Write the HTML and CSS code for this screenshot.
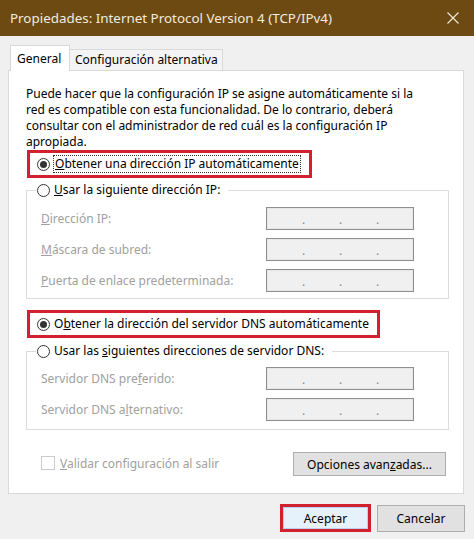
FILE: index.html
```html
<!DOCTYPE html>
<html lang="es">
<head>
<meta charset="utf-8">
<title>Propiedades: Internet Protocol Version 4 (TCP/IPv4)</title>
<link rel="stylesheet" href="styles.css">
</head>
<body>
<div class="window">
  <div class="titlebar">
    <span class="title">Propiedades: Internet Protocol Version 4 (TCP/IPv4)</span>
    <svg class="close" width="12" height="12" viewBox="0 0 12 12" aria-label="Cerrar"><path d="M0.5 0.5L11.5 11.5M11.5 0.5L0.5 11.5" stroke="#f2ebdf" stroke-width="1.1" fill="none"/></svg>
  </div>
  <div class="body">
    <div class="tabs">
      <div class="tab active">General</div>
      <div class="tab">Configuración alternativa</div>
    </div>
    <div class="panel">
      <p class="intro">Puede hacer que la configuración IP se asigne automáticamente si la<br>red es compatible con esta funcionalidad. De lo contrario, deberá<br>consultar con el administrador de red cuál es la configuración IP<br>apropiada.</p>

      <div class="option highlight first"><span class="radio checked"></span><span class="label focus"><u>O</u>btener una dirección IP automáticamente</span></div>

      <fieldset class="group group-ip">
        <legend class="option"><span class="radio"></span><span class="label"><u>U</u>sar la siguiente dirección IP:</span></legend>
        <div class="field"><span class="flabel"><u>D</u>irección IP:</span><span class="ipbox"><i>.</i><i>.</i><i>.</i></span></div>
        <div class="field"><span class="flabel"><u>M</u>áscara de subred:</span><span class="ipbox"><i>.</i><i>.</i><i>.</i></span></div>
        <div class="field"><span class="flabel"><u>P</u>uerta de enlace predeterminada:</span><span class="ipbox"><i>.</i><i>.</i><i>.</i></span></div>
      </fieldset>

      <div class="option highlight second"><span class="radio checked"></span><span class="label">O<u>b</u>tener la dirección del servidor DNS automáticamente</span></div>

      <fieldset class="group group-dns">
        <legend class="option"><span class="radio"></span><span class="label">Usar las <u>s</u>iguientes direcciones de servidor DNS:</span></legend>
        <div class="field"><span class="flabel">Servidor DNS pre<u>f</u>erido:</span><span class="ipbox"><i>.</i><i>.</i><i>.</i></span></div>
        <div class="field"><span class="flabel">Servidor DNS a<u>l</u>ternativo:</span><span class="ipbox"><i>.</i><i>.</i><i>.</i></span></div>
      </fieldset>

      <div class="bottom-row">
        <div class="check"><span class="checkbox"></span><span class="check-label"><u>V</u>alidar configuración al salir</span></div>
        <button class="btn advanced" type="button">Opciones avan<u>z</u>adas...</button>
      </div>
    </div>
    <div class="footer">
      <div class="ok-frame"><button class="btn ok" type="button">Aceptar</button></div>
      <button class="btn cancel" type="button">Cancelar</button>
    </div>
  </div>
</div>
</body>
</html>
```

FILE: styles.css
```css
* { box-sizing: border-box; }

html, body {
  margin: 0;
  padding: 0;
  background: #f0f0f0;
}

.window {
  width: 474px;
  height: 539px;
  background: #f0f0f0;
  font-family: "Noto Sans", "Open Sans", sans-serif;
  font-size: 12px;
  color: #000;
  overflow: hidden;
}

.titlebar {
  height: 36px;
  background: #6c4a12;
  color: #f2ebdf;
  display: flex;
  align-items: center;
  justify-content: space-between;
  padding: 0 15px 0 10px;
}

.title {
  font-size: 13.4px;
  letter-spacing: 0;
}

.close { display: block; }

.body {
  padding: 9px 10px 0 8px;
}

.tabs {
  display: flex;
  align-items: flex-end;
  height: 25px;
  padding-left: 2px;
}

.tab {
  height: 21px;
  line-height: 20px;
  padding: 0 4px 0 5px;
  border: 1px solid #d9d9d9;
  border-left: none;
  border-bottom: none;
  background: #f4f4f4;
}

.tab.active {
  height: 26px;
  line-height: 26px;
  width: 60px;
  padding: 0 0 0 6px;
  border-left: 1px solid #d9d9d9;
  background: #fff;
  margin-bottom: -1px;
  position: relative;
  z-index: 1;
}

.panel {
  height: 424px;
  background: #fff;
  border: 1px solid #d9d9d9;
  padding: 15px 14px 0 17px;
}

.intro {
  margin: 0;
  line-height: 16px;
  white-space: nowrap;
}

.option {
  display: flex;
  align-items: center;
  height: 16px;
  line-height: 16px;
}

.radio {
  width: 13px;
  height: 13px;
  border: 1px solid #333;
  border-radius: 50%;
  background: #fff;
  display: flex;
  align-items: center;
  justify-content: center;
  flex: none;
}

.radio.checked::after {
  content: "";
  width: 7px;
  height: 7px;
  border-radius: 50%;
  background: #333;
}

.label {
  margin-left: 4px;
  white-space: nowrap;
}

.label.focus {
  margin-left: 3px;
  border: 1px dotted #333;
  padding: 0 1px;
  line-height: 16px;
}

.highlight {
  height: 28px;
  width: fit-content;
  border: 3px solid #d2202f;
  padding: 0 8px 0 7px;
  margin-left: 1px;
}

.highlight.first { margin-top: 0; }
.highlight.second { margin-top: 11px; }

.group {
  margin: 4px 0 0 0;
  border: 1px solid #dcdcdc;
  padding: 9px 34px 6px 14px;
  display: flex;
  flex-direction: column;
  gap: 8px;
}

.group-dns {
  margin-top: 5px;
  padding-top: 8px;
  padding-bottom: 8px;
}

.group legend {
  padding: 0 8px 0 1px;
  margin-left: -5px;
}

.field {
  display: flex;
  align-items: center;
  justify-content: space-between;
  height: 23px;
}

.flabel {
  color: #a0a0a0;
}

.flabel u { text-decoration-color: #a0a0a0; }

.ipbox {
  width: 148px;
  height: 23px;
  background: #f0f0f0;
  border: 1px solid #8f8f8f;
  box-shadow: inset 0 0 0 1px #e6e6e6;
  display: flex;
  justify-content: space-evenly;
  align-items: flex-end;
  padding-bottom: 4px;
}

.ipbox i {
  font-style: normal;
  color: #8a8a8a;
  line-height: 10px;
  width: 2px;
  text-align: center;
}

.bottom-row {
  margin-top: 22px;
  display: flex;
  align-items: center;
  justify-content: space-between;
  padding-left: 15px;
  padding-right: 3px;
}

.check {
  display: flex;
  align-items: center;
  margin-top: -2px;
}

.checkbox {
  width: 14px;
  height: 14px;
  border: 1px solid #cccccc;
  background: #fff;
  flex: none;
}

.check-label {
  margin-left: 5px;
  color: #a0a0a0;
}

.btn {
  font-family: "Noto Sans", "Open Sans", sans-serif;
  font-size: 12px;
  color: #000;
  background: #e1e1e1;
  border: 1px solid #adadad;
  padding: 0;
  margin: 0;
}

.advanced {
  width: 153px;
  height: 24px;
}

.footer {
  margin-top: 10px;
  margin-right: -1px;
  display: flex;
  justify-content: flex-end;
  align-items: center;
  gap: 6px;
}

.ok-frame {
  border: 3px solid #d2202f;
  width: 91px;
  height: 28px;
  display: flex;
}

.ok {
  flex: 1;
  background: #e5f1fb;
  border: 1px solid #b7d4ee;
}

.cancel {
  width: 88px;
  height: 27px;
}
```
